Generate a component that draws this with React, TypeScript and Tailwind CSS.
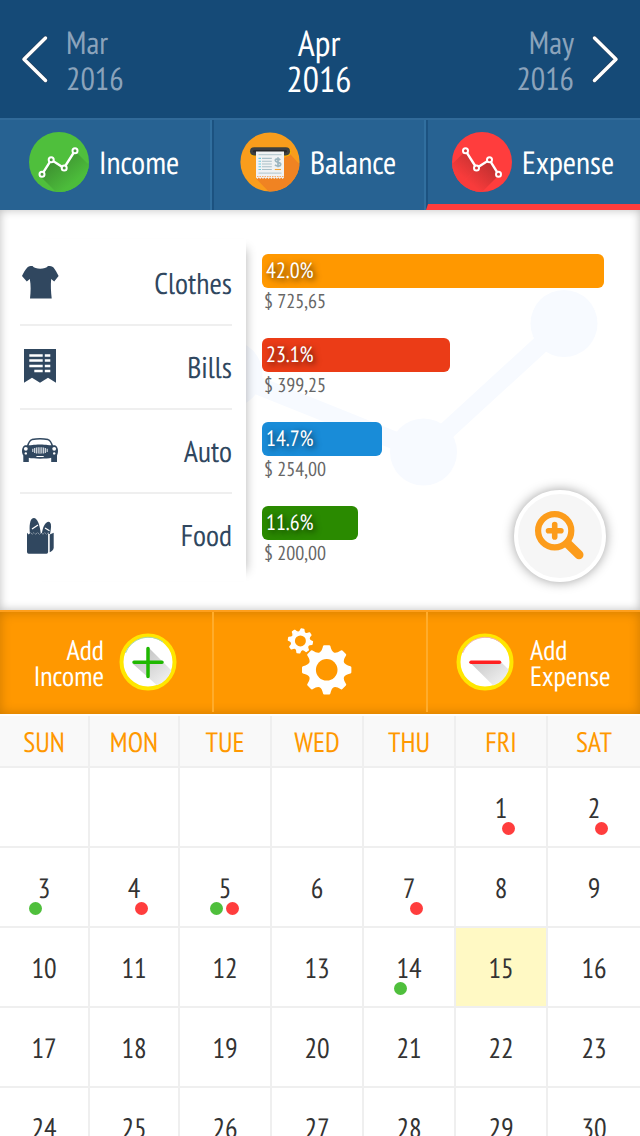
import type { ReactNode } from "react";

type Mark = "green" | "red";

const WEEKDAYS = ["SUN", "MON", "TUE", "WED", "THU", "FRI", "SAT"];

const MARKS: Record<number, Mark[]> = {
  1: ["red"],
  2: ["red"],
  3: ["green"],
  4: ["red"],
  5: ["green", "red"],
  7: ["red"],
  14: ["green"],
};

const TODAY = 15;
const FIRST_WEEKDAY = 5;

function Chevron({ flip = false }: { flip?: boolean }) {
  return (
    <svg className={flip ? "h-[50px] w-[30px] -scale-x-100" : "h-[50px] w-[30px]"} viewBox="0 0 30 50" fill="none">
      <path d="M25.500 4 L4 25.200 L25.500 46.400" stroke="#243f5c" strokeWidth="4.600" strokeLinecap="round" strokeLinejoin="round" />
      <path d="M25.500 4 L4 25.200 L25.500 46.400" stroke="#fff" strokeWidth="3.500" strokeLinecap="round" strokeLinejoin="round" />
    </svg>
  );
}

function IncomeIcon() {
  return (
    <svg className="size-[60px] shrink-0" viewBox="0 0 60 60">
      <defs>
        <linearGradient id="incShade" x1="25" y1="25" x2="45" y2="50" gradientUnits="userSpaceOnUse">
          <stop offset="0" stopColor="#3d8f30" />
          <stop offset="1" stopColor="#4cbc3b" />
        </linearGradient>
        <clipPath id="incClip">
          <circle cx="30" cy="30" r="30" />
        </clipPath>
      </defs>
      <circle cx="30" cy="30" r="30" fill="#4fbf3c" />
      <g clipPath="url(#incClip)">
        <path d="M12 45 L22 29 L35 36.500 L60 61 L28 61 Z" fill="url(#incShade)" />
        <path d="M35 37 L47 20 L62 35 L62 66 Z" fill="url(#incShade)" />
      </g>
      <path d="M13 42.300 L22.200 27.800 L35 36 L46 18.700" fill="none" stroke="#fff" strokeWidth="2.400" />
      <g fill="#4a9d3c" stroke="#fff" strokeWidth="2">
        <circle cx="13" cy="42.300" r="2.500" />
        <circle cx="22.200" cy="27.800" r="2.500" />
        <circle cx="35.200" cy="36" r="2.500" />
        <circle cx="46" cy="18.700" r="2.500" />
      </g>
    </svg>
  );
}

function ExpenseIcon() {
  return (
    <svg className="size-[60px] shrink-0" viewBox="0 0 60 60">
      <defs>
        <linearGradient id="expShade" x1="32" y1="26" x2="14" y2="48" gradientUnits="userSpaceOnUse">
          <stop offset="0" stopColor="#c03030" />
          <stop offset="1" stopColor="#f83b3b" />
        </linearGradient>
        <clipPath id="expClip">
          <circle cx="30" cy="30" r="30" />
        </clipPath>
      </defs>
      <circle cx="30" cy="30" r="30" fill="#ff3d3d" />
      <g clipPath="url(#expClip)">
        <path d="M13.500 19 L24.500 36 L4 58 L-6 58 L-6 38 Z" fill="url(#expShade)" />
        <path d="M24.500 36 L37.500 28 L47 43 L28 62 L0 62 Z" fill="url(#expShade)" />
      </g>
      <path d="M13.500 18.700 L24.500 36 L37.500 27.800 L46.500 42.300" fill="none" stroke="#fff" strokeWidth="2.400" />
      <g fill="#d43737" stroke="#fff" strokeWidth="2">
        <circle cx="13.500" cy="18.700" r="2.500" />
        <circle cx="24.500" cy="36" r="2.500" />
        <circle cx="37.500" cy="27.800" r="2.500" />
        <circle cx="46.500" cy="42.300" r="2.500" />
      </g>
    </svg>
  );
}

function BalanceIcon() {
  return (
    <svg className="size-[60px] shrink-0" viewBox="0 0 60 60">
      <defs>
        <clipPath id="balClip">
          <circle cx="30" cy="30" r="29.600" />
        </clipPath>
      </defs>
      <circle cx="30" cy="30" r="29.600" fill="#f99d1c" />
      <path d="M50 22 L62 35 L62 62 L31 62 L16 46.500 Z" fill="#f08322" clipPath="url(#balClip)" />
      <rect x="9.500" y="15.600" width="41.500" height="8.600" rx="4.300" fill="#f7b500" />
      <rect x="10" y="15.200" width="40" height="8.200" rx="4.100" fill="#3d3f42" />
      <rect x="13" y="18" width="34" height="2.600" rx="1.300" fill="#292a2c" />
      <path d="M16 19.500 H44 V45.500 L42.600 47 L41.200 45.500 L39.800 47 L38.400 45.500 L37 47 L35.600 45.500 L34.200 47 L32.800 45.500 L31.400 47 L30 45.500 L28.600 47 L27.200 45.500 L25.800 47 L24.400 45.500 L23 47 L21.600 45.500 L20.200 47 L18.800 45.500 L17.400 47 L16 45.500 Z" fill="#f0f2f3" />
      <path d="M18.500 22.600 H41.500 M18.500 41.200 H41.500" stroke="#bccdd3" strokeWidth="1.300" />
      <path d="M18.500 26.400 H21 M18.500 29.200 H21 M18.500 32 H21 M18.500 34.800 H21 M18.500 37.500 H21" stroke="#6dcbe0" strokeWidth="1.100" />
      <path d="M22 26.400 H31.800 M22 29.200 H31.800 M22 32 H31.800 M22 34.800 H31.800 M22 37.500 H31.800" stroke="#a9bfc8" strokeWidth="1.100" />
      <path d="M40.300 28 C39 26.500 35.300 26.500 35.300 28.600 C35.300 30.800 40.700 29.800 40.700 32.200 C40.700 34.500 36.500 34.500 35 32.800 M38 25.300 V35.200" fill="none" stroke="#9db6c0" strokeWidth="1.700" />
      <path d="M34.800 37.500 H41" stroke="#f7a535" strokeWidth="1.100" />
      <path d="M17 44.500 H43.500" stroke="#f5a55e" strokeWidth="0.900" strokeDasharray="1.500 1" />
    </svg>
  );
}

function ShirtIcon() {
  return (
    <svg className="size-10" viewBox="0 0 40 40" fill="#30475f">
      <path d="M12.500 3 C15 6.700 25.500 6.700 28 3 C30.500 3 32 3.300 33.500 4.500 C35.500 7 37 10 38.600 13 L34.200 18.500 L31.200 16 C30.500 22 31 29 31.700 35.400 H10 C10.800 29 11 22 9.800 16 L6.800 18.500 L2 13 C3.500 10 5 7 7.300 4.500 C8.500 3.300 10 3 12.500 3 Z" />
    </svg>
  );
}

function BillIcon() {
  return (
    <svg className="size-10" viewBox="0 0 40 40">
      <path d="M4 2 H36 V35.700 L28 30.800 L20 35.700 L12 30.800 L4 35.700 Z" fill="#30475f" />
      <path d="M9.300 8.600 H22.700 M24.800 8.600 H30.300 M9.300 13.600 H22.700 M24.800 13.600 H30.300 M9.300 19 H22.700 M24.800 19 H30.300 M14.300 24 H22.700 M24.800 24 H30.300" stroke="#fff" strokeWidth="2.500" />
    </svg>
  );
}

function CarIcon() {
  return (
    <svg className="size-10" viewBox="0 0 40 40">
      <path d="M7.500 15.500 C8.500 11.500 9.800 9.300 12 8.600 C16 7.700 24 7.700 28 8.600 C30.200 9.300 31.500 11.500 32.500 15.500" fill="none" stroke="#30475f" strokeWidth="1.500" />
      <path d="M5 14.300 C10 14.500 13 13.400 20 13.400 C27 13.400 30 14.500 35 14.300 C37 15 38 17.500 38 20 C38 22 37.300 23.500 37 24.500 V31 H31.200 V26.800 C27 28 13 28 8.800 26.800 V31 H3.300 V24.500 C2.700 23.500 2 22 2 20 C2 17.500 3 15 5 14.300 Z" fill="#30475f" />
      <g fill="#fff">
        <circle cx="5.800" cy="17.800" r="1.900" />
        <circle cx="34.200" cy="17.800" r="1.900" />
        <circle cx="5.800" cy="22.400" r="1.200" />
        <circle cx="34.200" cy="22.400" r="1.200" />
        <rect x="16.300" y="24.900" width="7.500" height="1.100" rx="0.500" />
      </g>
      <path d="M12.800 17.700 V21.100 M14.600 17 V21.900 M16.400 16.600 V22.400 M18.200 16.300 V22.600 M20 16.200 V22.700 M21.800 16.300 V22.600 M23.600 16.600 V22.400 M25.400 17 V21.900 M27.200 17.700 V21.100" stroke="#d3d9df" strokeWidth="1.150" />
    </svg>
  );
}

function FoodIcon() {
  return (
    <svg className="size-10" viewBox="0 0 40 40" fill="#30475f">
      <path d="M10 19 C9 12 9.600 3 13.700 3 C17.800 3 20 11 20.800 19 Z" />
      <path d="M21.800 19 C22.600 12 25.500 6.600 28.700 6.700 C32.200 7.200 31 14 30 19 Z" />
      <path d="M12 14 L18 10 M25 13 L29.500 15.800" stroke="#fff" strokeWidth="1.300" />
      <path d="M7 17.800 L8.700 19.600 L10.400 17.800 L12.200 19.600 L14 17.800 L15.800 19.600 L17.600 17.800 L19.400 19.600 L21.200 17.800 L23 19.600 L24.800 17.800 L26.500 19.600 L28.100 17.800 V37 Q28.100 38.700 26.500 38.700 H8.700 Q7 38.700 7 37 Z" stroke="#fff" strokeWidth="0.800" paintOrder="stroke" />
      <path d="M29.700 19.500 L33.700 17.800 V32.700 C33.700 35 31.500 36.300 29.700 37.200 Z" />
    </svg>
  );
}

function gearPath(radius: number, root: number) {
  const at = (deg: number, r: number) => {
    const a = (deg * Math.PI) / 180;
    return `${(r * Math.cos(a)).toFixed(2)} ${(r * Math.sin(a)).toFixed(2)}`;
  };
  let d = `M${at(-6, radius)}`;
  for (let i = 0; i < 8; i++) {
    const t = i * 45;
    d += ` L${at(t + 6, radius)} C${at(t + 15, root)} ${at(t + 30, root)} ${at(t + 39, radius)}`;
  }
  return d + "Z";
}

function GearsIcon() {
  return (
    <svg className="h-[70px] w-[70px]" viewBox="285 627 70 70">
      <g fill="#fff" stroke="#fff" strokeLinejoin="round">
        <path transform="translate(326.700 669.800)" strokeWidth="2.400" d={gearPath(23.6, 16)} />
        <path transform="translate(300.400 640.900) rotate(10)" strokeWidth="1.500" d={gearPath(12, 8)} />
      </g>
      <circle cx="326.700" cy="669.800" r="10.800" fill="#ff9800" />
      <circle cx="300.400" cy="640.900" r="5.500" fill="#ff9800" />
    </svg>
  );
}

function RoundAction({ kind }: { kind: "plus" | "minus" }) {
  const plus = kind === "plus";
  return (
    <svg className="size-[58px] shrink-0" viewBox="0 0 58 58">
      <defs>
        <linearGradient id={`fade-${kind}`} x1="20" y1="22" x2="42" y2="50" gradientUnits="userSpaceOnUse">
          <stop offset="0" stopColor="#c4c4c4" />
          <stop offset="1" stopColor="#ededed" />
        </linearGradient>
        <clipPath id={`clip-${kind}`}>
          <circle cx="29" cy="29" r="25" />
        </clipPath>
      </defs>
      <circle cx="29" cy="29" r="26.500" fill="#fff" stroke="#ffe600" strokeWidth="4" />
      <path d="M6.500 20 A24.500 24.500 0 0 1 44 9" fill="none" stroke={plus ? "#a8d8b0" : "#f3b0b0"} strokeWidth="1" />
      <g clipPath={`url(#clip-${kind})`}>
        <path
          d={plus ? "M30 15 L58 43 L58 70 L14 31 L29 30 Z" : "M14.500 30 L45 29 L60 44 L60 75 Z"}
          fill={`url(#fade-${kind})`}
        />
      </g>
      {plus ? (
        <path d="M29 15.500 V43.500 M15 29.300 H43" stroke="#1fb800" strokeWidth="3.500" strokeLinecap="round" />
      ) : (
        <path d="M15 29.300 H43.500" stroke="#ff2020" strokeWidth="3.500" strokeLinecap="round" />
      )}
    </svg>
  );
}

function ZoomButton() {
  return (
    <button className="absolute top-[280px] left-[514px] flex size-[92px] items-center justify-center rounded-full border-4 border-white bg-[#f6f6f6] shadow-[0_0_12px_rgba(0,0,0,0.38)]">
      <svg className="size-[60px] shrink-0" viewBox="530 506 60 60" fill="none" stroke="#fc9c1b">
        <circle cx="554.700" cy="530.700" r="16.600" strokeWidth="6.200" />
        <path d="M554.700 524.500 V536.900 M548.500 530.700 H560.900" strokeWidth="5.600" strokeLinecap="round" />
        <path d="M568.500 544.500 L579 554.800" strokeWidth="9" strokeLinecap="round" />
      </svg>
    </button>
  );
}

const CATEGORIES: {
  name: string;
  icon: ReactNode;
  percent: string;
  amount: string;
  bar: string;
}[] = [
  { name: "Clothes", icon: <ShirtIcon />, percent: "42.0%", amount: "$ 725,65", bar: "w-[342px] bg-[#ff9800]" },
  { name: "Bills", icon: <BillIcon />, percent: "23.1%", amount: "$ 399,25", bar: "w-[188px] bg-[#eb3c17]" },
  { name: "Auto", icon: <CarIcon />, percent: "14.7%", amount: "$ 254,00", bar: "w-[120px] bg-[#198cd8]" },
  { name: "Food", icon: <FoodIcon />, percent: "11.6%", amount: "$ 200,00", bar: "w-[96px] bg-[#2a8a00]" },
];

function Header() {
  return (
    <header className="flex h-[118px] items-start justify-between bg-[#154a77] pt-6 leading-9">
      <div className="flex w-[200px] gap-[16px] pl-5 text-[32px] text-[#8ba3bb]">
        <div className="pt-[10px]">
          <Chevron />
        </div>
        <div>
          <p>Mar</p>
          <p>2016</p>
        </div>
      </div>
      <div className="pt-px pr-[2px] text-center text-[36px] text-white">
        <p>Apr</p>
        <p>2016</p>
      </div>
      <div className="flex w-[200px] justify-end gap-[16px] pr-5 text-right text-[32px] text-[#8ba3bb]">
        <div>
          <p>May</p>
          <p>2016</p>
        </div>
        <div className="pt-[10px]">
          <Chevron flip />
        </div>
      </div>
    </header>
  );
}

function Tabs() {
  return (
    <nav className="flex h-[92px] border-t-2 border-[#316a99] bg-[#276292] text-[32px] leading-9 text-white">
      <div className="flex w-[212px] items-center gap-[10px] border-r-2 border-[#316f9f] pb-[6px] pl-[29px]">
        <IncomeIcon />
        <span>Income</span>
      </div>
      <div className="flex w-[214px] items-center gap-[10px] border-r-2 border-l-2 border-r-[#316f9f] border-l-[#1c5280] pb-[6px] pl-[26px]">
        <BalanceIcon />
        <span>Balance</span>
      </div>
      <div className="flex w-[214px] items-center gap-[10px] border-b-[6px] border-l-2 border-b-[#ff3d3d] border-l-[#1c5280] pl-[24px]">
        <ExpenseIcon />
        <span>Expense</span>
      </div>
    </nav>
  );
}

function Chart() {
  return (
    <section className="relative h-[400px] bg-white">
      <svg className="absolute inset-0 h-[400px] w-[640px]" viewBox="0 210 640 400">
        <path d="M229 374 L423.500 452 L564 323" fill="none" stroke="#f7faff" strokeWidth="18" />
        <g fill="#f7faff">
          <circle cx="229" cy="374" r="33.500" />
          <circle cx="423.500" cy="452" r="33.500" />
          <circle cx="564" cy="323.500" r="33.500" />
        </g>
      </svg>
      <div className="relative flex h-[400px] pt-[29px] pl-5 shadow-[inset_0_0_10px_rgba(0,0,0,0.26)]">
        <div className="h-[342px] w-[226px] bg-white pt-[3px] pr-[14px] shadow-[10px_0_10px_-10px_rgba(0,0,0,0.3)]">
          {CATEGORIES.map((c) => (
            <div
              key={c.name}
              className="flex h-[84px] items-center justify-between border-b-2 border-[#efefef] text-[30px] text-[#30475f] last:border-transparent"
            >
              {c.icon}
              <span>{c.name}</span>
            </div>
          ))}
        </div>
        <div className="flex-1 pt-[15px] pl-4">
          {CATEGORIES.map((c) => (
            <div key={c.name} className="h-[84px]">
              <div className={`h-[34px] rounded-[6px] pl-1 text-[22px] leading-[34px] text-white text-shadow-[2px_2px_6px_rgba(0,0,0,0.75)] ${c.bar}`}>
                {c.percent}
              </div>
              <p className="pl-[2px] text-[20px] leading-[26px] text-[#666]">{c.amount}</p>
            </div>
          ))}
        </div>
      </div>
      <ZoomButton />
    </section>
  );
}

function Actions() {
  return (
    <section className="flex h-[104px] border-t-2 border-[#ff9f1c] bg-[#ff9800] pb-[2px] text-[28px] leading-[26px] text-white shadow-[inset_0_0_12px_rgba(0,0,0,0.2)]">
      <div className="flex w-[214px] items-center justify-end gap-[15px] border-r-2 border-[#ffac2b] pr-[35px] text-right">
        <p className="pt-[2px]">
          Add
          <br />
          Income
        </p>
        <RoundAction kind="plus" />
      </div>
      <div className="flex w-[214px] items-center border-r-2 border-[#ffac2b] pl-[71px]">
        <GearsIcon />
      </div>
      <div className="flex items-center gap-[16px] pl-[28px]">
        <RoundAction kind="minus" />
        <p className="pt-[2px]">
          Add
          <br />
          Expense
        </p>
      </div>
    </section>
  );
}

function DayCell({ day }: { day: number }) {
  const marks = MARKS[day] ?? [];
  return (
    <div
      className={`relative flex h-20 items-center justify-center border-r-2 border-b-2 border-[#efefef] pt-[2px] text-[#333] ${
        day === TODAY ? "bg-[#fff9c4] bg-clip-padding" : "bg-white"
      }`}
    >
      {day > 0 && <span>{day}</span>}
      {marks.length > 0 && (
        <div className="absolute inset-x-0 top-[54px] flex justify-center gap-[3px] pr-[2px]">
          <i className={`size-[13px] rounded-full ${marks.includes("green") ? "bg-[#4fbf3c]" : ""}`} />
          <i className={`size-[13px] rounded-full ${marks.includes("red") ? "bg-[#ff3d3d]" : ""}`} />
        </div>
      )}
    </div>
  );
}

function Calendar() {
  const cells = Array.from({ length: 35 }, (_, i) => i - FIRST_WEEKDAY + 1);
  return (
    <section className="grid grid-cols-[90px_90px_92px_92px_92px_92px_94px] pt-[2px] text-[28px]">
      {WEEKDAYS.map((d) => (
        <div
          key={d}
          className="flex h-[52px] items-center justify-center border-r-2 border-b-2 border-[#efefef] bg-[#f9f9f9] pt-[2px] text-[#ff9800]"
        >
          {d}
        </div>
      ))}
      {cells.map((day) => (
        <DayCell key={day} day={day} />
      ))}
    </section>
  );
}

export default function App() {
  return (
    <div className="h-[1136px] w-[640px] overflow-hidden bg-white font-['PT_Sans_Narrow','Open_Sans',sans-serif] [font-stretch:75%] [text-rendering:geometricPrecision]">
      <Header />
      <Tabs />
      <Chart />
      <Actions />
      <Calendar />
    </div>
  );
}
